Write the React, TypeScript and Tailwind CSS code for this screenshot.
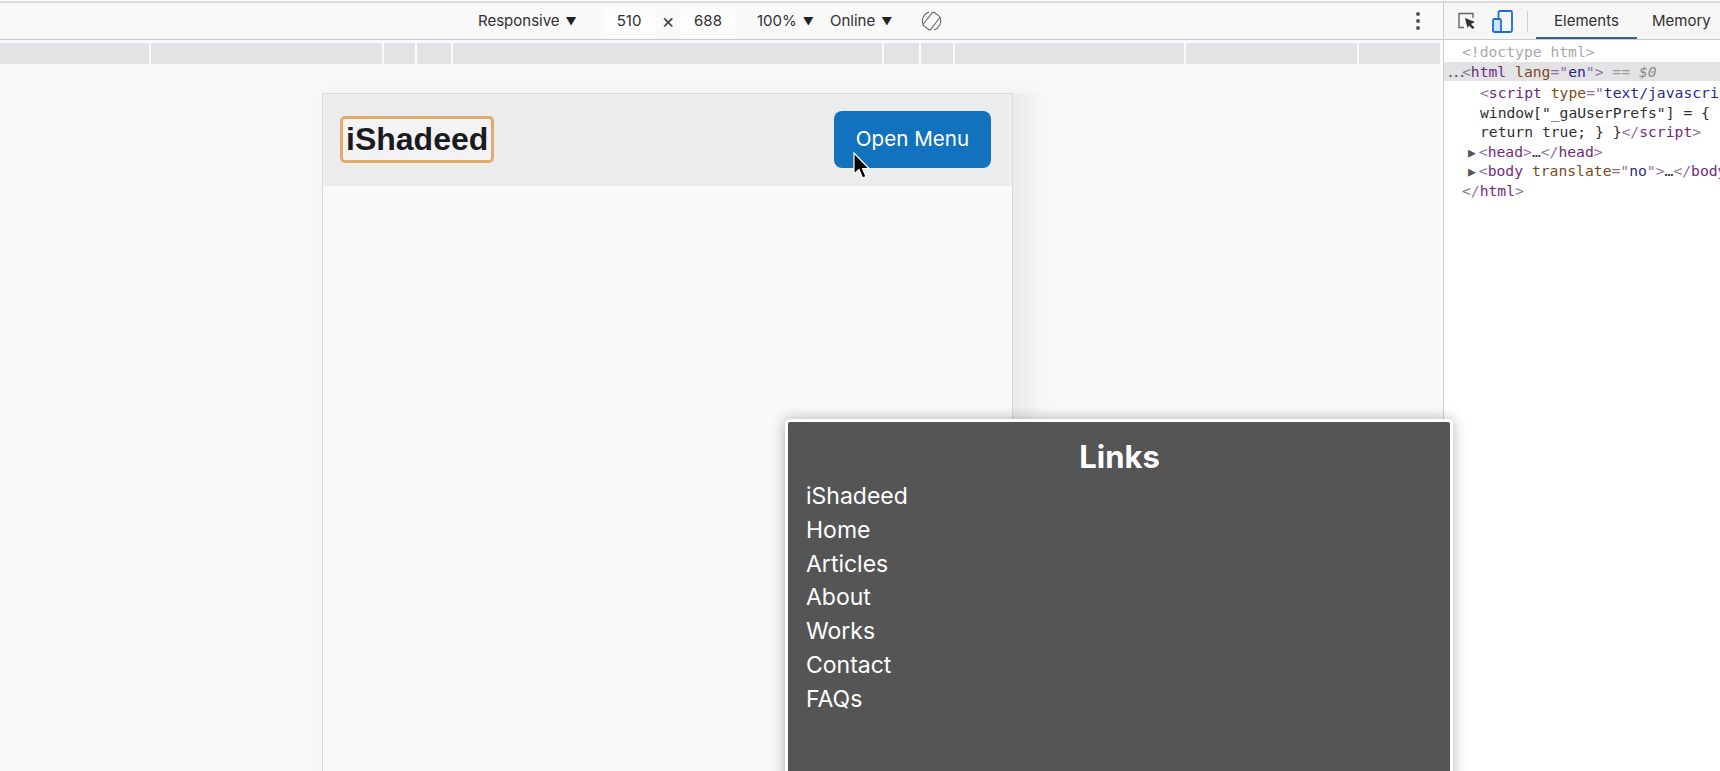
import React from "react";

const rulerWidths = [149, 231, 31, 34, 429, 35, 32, 229, 171, 81];

function Caret() {
  return <span className="ml-[6px] text-[11px] leading-none text-[#222]">▼</span>;
}

function CodeLine({ indent, children, className = "" }: { indent: string; children: React.ReactNode; className?: string }) {
  return <div className={`${indent} h-[19.5px] leading-[19.5px] whitespace-nowrap ${className}`}>{children}</div>;
}

const P = ({ children }: { children: React.ReactNode }) => <span className="text-[#8f6fa0]">{children}</span>;
const T = ({ children }: { children: React.ReactNode }) => <span className="text-[#6f2a80]">{children}</span>;
const A = ({ children }: { children: React.ReactNode }) => <span className="text-[#7d4a1c]">{children}</span>;
const V = ({ children }: { children: React.ReactNode }) => <span className="text-[#1f2a8c]">{children}</span>;
const G = ({ children }: { children: React.ReactNode }) => <span className="text-[#9a9a9a]">{children}</span>;

export default function App() {
  return (
    <div className="relative flex h-[771px] w-[1720px] flex-col overflow-hidden bg-[#f9f9fb] font-['Inter',sans-serif] text-[#333]">
      <div className="h-[3px] shrink-0 border-b-2 border-[#dcdcde] bg-white" />
      <div className="flex min-h-0 flex-1">
        {/* Viewport pane */}
        <div className="flex w-[1444px] shrink-0 flex-col border-r border-[#cfcfd1]">
          <div className="relative flex h-[37px] shrink-0 items-center border-b border-[#c9c9cb] bg-[#f9f9fa] pl-[478px] text-[15px] text-[#303030]">
            <span className="flex w-[125px] items-center">
              Responsive
              <Caret />
            </span>
            <span className="flex h-[25px] w-[52px] items-center justify-center bg-[#fdfdfe]">510</span>
            <span className="flex w-[26px] justify-center text-[20px] leading-none text-[#444]">×</span>
            <span className="flex h-[25px] w-[54px] items-center justify-center bg-[#fdfdfe]">688</span>
            <span className="ml-[22px] flex w-[73px] items-center">
              100%
              <Caret />
            </span>
            <span className="flex w-[91px] items-center">
              Online
              <Caret />
            </span>
            <svg width="21" height="20" viewBox="0 0 21 20" fill="none" stroke="#666" strokeWidth="1.1">
              <rect x="6" y="1.5" width="9" height="17" rx="1.5" transform="rotate(38 10.5 10)" />
              <path d="M2 13.5 A9.5 9.5 0 0 1 8 1 M19 6.5 A9.5 9.5 0 0 1 13 19" />
            </svg>
            <div className="ml-auto mr-[23px] flex flex-col gap-[3px]">
              <span className="h-[4px] w-[4px] rounded-full bg-[#555]" />
              <span className="h-[4px] w-[4px] rounded-full bg-[#555]" />
              <span className="h-[4px] w-[4px] rounded-full bg-[#555]" />
            </div>
          </div>

          <div className="mt-[3px] flex h-[21px] shrink-0 gap-[2px] pr-[2px]">
            {rulerWidths.map((w, i) => (
              <div key={i} className="h-full bg-[#e3e2e5]" style={{ width: w }} />
            ))}
          </div>

          <div className="flex min-h-0 flex-1 items-start overflow-hidden pl-[322px] pt-[29px]">
            <div className="flex h-[700px] w-[717px] shrink-0 shadow-[0_-6px_24px_rgba(0,0,0,0.03)]">
              <div className="w-[691px] shrink-0 border border-b-0 border-[#d9d9db] bg-[#f9f9fb]">
                <header className="flex h-[92px] items-center justify-between bg-[#ececed] pl-[17px] pr-[21px]">
                  <span className="mb-[2px] rounded-[5px] border-[3px] border-[#e2ab6c] bg-[#f3f3f3] pb-[1px] pl-[3px] pr-[3px] pt-0 font-['Liberation_Sans',sans-serif] text-[32px] font-bold leading-[40px] text-[#1b1b1f]">
                    iShadeed
                  </span>
                  <button className="mb-[2px] h-[57px] w-[157px] rounded-[8px] bg-[#1272bd] text-[20.6px] leading-none text-white">
                    Open Menu
                  </button>
                </header>
              </div>
              <div className="w-[26px] shrink-0 bg-gradient-to-r from-[#ebebed] to-[#f5f5f7]" />
            </div>
          </div>
        </div>

        {/* Devtools pane */}
        <div className="flex min-w-0 flex-1 flex-col bg-white">
          <div className="flex h-[37px] shrink-0 items-center border-b border-[#c9c9cb] bg-[#f6f6f7] text-[15px] text-[#303030]">
            <svg className="ml-[13px]" width="20" height="18" viewBox="0 0 20 18" fill="none">
              <path d="M7 15.5H2V1.5H16V6" stroke="#666" strokeWidth="1.4" />
              <path d="M8 6L18 10L14 12L17.5 15.5L15.5 17L12 13.5L10.5 16Z" fill="#333" />
            </svg>
            <svg className="ml-[15px]" width="21" height="23" viewBox="0 0 21 23" fill="none" stroke="#1a6fc9" strokeWidth="1.8">
              <rect x="6.5" y="1" width="13.5" height="21" rx="1.5" />
              <rect x="1" y="9" width="8" height="13" rx="1.5" fill="#cfe2f7" />
            </svg>
            <span className="ml-[14px] h-[21px] w-px bg-[#cfcfd1]" />
            <div className="ml-[8px] flex h-full w-[101px] items-center justify-center border-b-2 border-[#2f5f9e] pt-[2px]">Elements</div>
            <span className="ml-[15px]">Memory</span>
          </div>
          <div className="overflow-hidden pt-[2px] font-['DejaVu_Sans_Mono',monospace] text-[14.7px] text-[#303030]">
            <CodeLine indent="pl-[18px]" className="text-[#a8a8a8]">{"<!doctype html>"}</CodeLine>
            <CodeLine indent="pl-[2px]" className="bg-[#e3e3e5]">
              <span className="inline-block w-[16px] tracking-[-3px] text-[#555]">...</span>
              <P>{"<"}</P><T>html</T> <A>lang</A><P>="</P><V>en</V><P>{'">'}</P> <G>==</G> <span className="italic text-[#8a8a8a]">$0</span>
            </CodeLine>
            <CodeLine indent="pl-[36px]" className="mt-[2px]">
              <P>{"<"}</P><T>script</T> <A>type</A><P>="</P><V>text/javascript</V>
            </CodeLine>
            <CodeLine indent="pl-[36px]">{'window["_gaUserPrefs"] = {'}</CodeLine>
            <CodeLine indent="pl-[36px]">
              {"return true; } }"}<P>{"</"}</P><T>script</T><P>{">"}</P>
            </CodeLine>
            <CodeLine indent="pl-[24px]">
              <span className="mr-[3px] text-[13px] text-[#555]">▶</span><P>{"<"}</P><T>head</T><P>{">"}</P>…<P>{"</"}</P><T>head</T><P>{">"}</P>
            </CodeLine>
            <CodeLine indent="pl-[24px]">
              <span className="mr-[3px] text-[13px] text-[#555]">▶</span><P>{"<"}</P><T>body</T> <A>translate</A><P>="</P><V>no</V><P>{'">'}</P>…<P>{"</"}</P><T>body</T><P>{">"}</P>
            </CodeLine>
            <CodeLine indent="pl-[18px]">
              <P>{"</"}</P><T>html</T><P>{">"}</P>
            </CodeLine>
          </div>
        </div>
      </div>

      {/* Links panel, floats over the page */}
      <aside className="absolute left-[785px] top-[419px] h-[400px] w-[668px] rounded-[5px] border-[3px] border-white bg-[#555555] pl-[18px] pr-[17px] pt-[17px] text-white shadow-[0_0_14px_rgba(0,0,0,0.3)]">
        <h2 className="text-center text-[31px] font-bold leading-[36px]">Links</h2>
        <ul className="mt-[5px] text-[23px] leading-[33.8px]">
          {["iShadeed", "Home", "Articles", "About", "Works", "Contact", "FAQs"].map((l) => (
            <li key={l}>{l}</li>
          ))}
        </ul>
      </aside>

      {/* Mouse pointer */}
      <svg className="absolute left-[853px] top-[152px]" width="18" height="30" viewBox="0 0 18 30">
        <path d="M1 1V22L6 17.5L9.5 26L13 24.5L9.5 16.5H16Z" fill="#000" stroke="#fff" strokeWidth="1.2" />
      </svg>
    </div>
  );
}
